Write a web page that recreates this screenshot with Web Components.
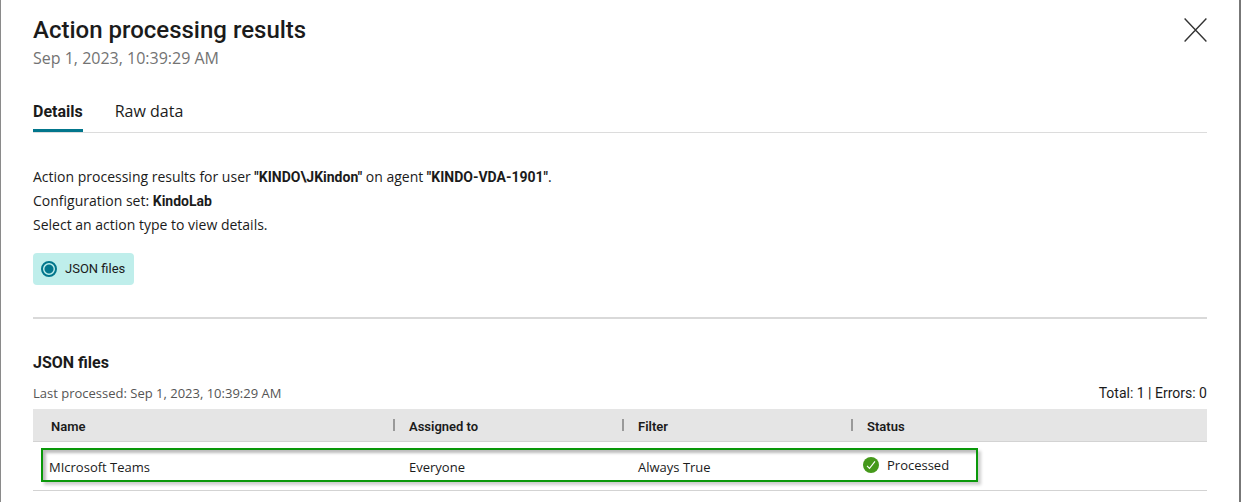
<!DOCTYPE html>
<html lang="en">
<head>
<meta charset="utf-8">
<title>Action processing results</title>
<style>
  html, body { margin: 0; min-height: 100%; background: #fff; }
  body {
    --text-font: "Open Sans", "Liberation Sans", sans-serif;
    --strong-font: Roboto, "Liberation Sans", sans-serif;
    --ink: #1b1b1b;
    --muted: #737373;
    --line: #dcdcdc;
    --accent: #02768c;
    font: 14px/24px var(--text-font);
    color: var(--ink);
  }
</style>
</head>
<body>
<results-dialog>
  <dialog-header slot="header">
    <span slot="title">Action processing results</span>
    <span slot="subtitle">Sep 1, 2023, 10:39:29 AM</span>
  </dialog-header>
  <tab-bar></tab-bar>
  <action-summary user="KINDO\JKindon" agent="KINDO-VDA-1901" config="KindoLab"></action-summary>
  <action-choice>JSON files</action-choice>
  <results-section>
    <span slot="title">JSON files</span>
    <span slot="processed">Last processed: Sep 1, 2023, 10:39:29 AM</span>
    <span slot="counts">Total: 1 | Errors: 0</span>
    <results-table></results-table>
  </results-section>
</results-dialog>
<script>
class View extends HTMLElement {
  constructor() {
    super();
    this.attachShadow({ mode: "open" }).innerHTML = this.markup();
  }
}

customElements.define("results-dialog", class extends View {
  markup() { return `
    <style>
      :host { display: block; box-sizing: border-box; min-height: 100vh; padding: 16px 32px 11px;
        border-left: 1px solid #8a8a8a; border-right: 2px solid #777; }
    </style>
    <slot name="header"></slot>
    <main><slot></slot></main>`; }
});

customElements.define("dialog-header", class extends View {
  markup() { return `
    <style>
      :host { display: flex; justify-content: space-between; align-items: flex-start; }
      h1 { margin: 0; font: 500 24px/28px var(--strong-font); }
      p { margin: 0; font-size: 16px; line-height: 28px; color: var(--muted); }
      button { display: flex; margin: 0; padding: 2px 0; border: 0; background: none; color: #333; }
    </style>
    <div><h1><slot name="title"></slot></h1><p><slot name="subtitle"></slot></p></div>
    <button type="button" aria-label="Close">
      <svg width="23" height="24" viewBox="0 0 23 24" fill="none" stroke="currentColor" stroke-width="1.4"><path d="M.6.6 22.4 23.4M22.4.6.6 23.4"/></svg>
    </button>`; }
});

customElements.define("tab-bar", class extends View {
  markup() { return `
    <style>
      :host { display: block; margin-top: 20px; border-bottom: 1px solid var(--line); }
      nav { display: flex; gap: 32px; }
      a { color: inherit; text-decoration: none; font-size: 16px; line-height: 35px; padding-top: 2px; border-bottom: 3px solid transparent; }
      a[aria-current] { font-family: var(--strong-font); font-weight: 700; border-color: var(--accent); }
    </style>
    <nav><a href="#details" aria-current="page">Details</a><a href="#raw">Raw data</a></nav>`; }
});

customElements.define("action-summary", class extends View {
  markup() {
    const value = name => this.getAttribute(name);
    return `
    <style>
      :host { display: block; margin-top: 32px; }
      p { margin: 0; }
      b { font-family: var(--strong-font); font-weight: 700; }
    </style>
    <p>Action processing results for user <b>"${value("user")}"</b> on agent <b>"${value("agent")}"</b>.</p>
    <p>Configuration set: <b>${value("config")}</b></p>
    <p>Select an action type to view details.</p>`; }
});

customElements.define("action-choice", class extends View {
  markup() { return `
    <style>
      :host { display: flex; margin-top: 16px; padding-bottom: 32px; border-bottom: 2px solid #d9d9d9; }
      label { display: flex; align-items: center; gap: 8px; height: 32px; padding: 0 9px 0 8px; border-radius: 4px;
        background: #bfeeeb; font: 13px/32px var(--strong-font); }
      input { appearance: none; box-sizing: border-box; width: 16px; height: 16px; margin: 0; border: 2px solid var(--accent);
        border-radius: 50%; background: radial-gradient(circle, var(--accent) 4px, transparent 5px); }
    </style>
    <label><input type="radio" name="type" checked><slot></slot></label>`; }
});

customElements.define("results-section", class extends View {
  markup() { return `
    <style>
      :host { display: block; margin-top: 32px; }
      h2 { margin: 0; font: 700 16px/24px var(--strong-font); }
      .meta { display: flex; justify-content: space-between; align-items: center; margin: 6px 0 4px; }
      .processed { font-size: 13px; color: #555; }
      .counts { font-family: var(--strong-font); }
    </style>
    <h2><slot name="title"></slot></h2>
    <div class="meta"><span class="processed"><slot name="processed"></slot></span><span class="counts"><slot name="counts"></slot></span></div>
    <slot></slot>`; }
});

customElements.define("results-table", class extends View {
  markup() { return `
    <style>
      :host { display: block; position: relative; }
      table { width: 100%; table-layout: fixed; border-collapse: separate; border-spacing: 0; font-size: 13px; }
      th, td { box-sizing: border-box; text-align: left; border-bottom: 1px solid #d3d3d3; }
      th { height: 33px; padding: 4px 0 0; background: #e5e5e5; font-family: var(--strong-font); font-weight: 600; line-height: 24px; }
      th span { display: block; padding-left: 16px; }
      th + th span { background: linear-gradient(#999, #999) 0 4px / 2px 12px no-repeat; }
      td { height: 49px; padding: 2px 0 0 16px; }
      .name { width: 360px; }
      .name span { padding-left: 18px; }
      .mid { width: 229px; }
      td:last-child { padding-left: 12px; }
      .status { display: flex; align-items: center; gap: 8px; margin-top: -4px; }
      .mark { position: absolute; left: 8px; right: 229px; top: 39px; height: 34px; box-sizing: border-box;
        border: 2px solid #0a980a; pointer-events: none;
        box-shadow: 3px 3px 3px #0003, inset 3px 3px 3px #0004; }
    </style>
    <table>
      <thead><tr><th class="name"><span>Name</span></th><th class="mid"><span>Assigned to</span></th><th class="mid"><span>Filter</span></th><th><span>Status</span></th></tr></thead>
      <tbody><tr><td>MIcrosoft Teams</td><td>Everyone</td><td>Always True</td>
        <td><div class="status"><svg width="16" height="16" viewBox="0 0 16 16" aria-hidden="true"><circle cx="8" cy="8" r="8" fill="#45991b"/><path d="m4 8.8 2.5 2.6L12 4.4" fill="none" stroke="#fff" stroke-width="1.1"/></svg><span>Processed</span></div></td></tr></tbody>
    </table>
    <div class="mark"></div>`; }
});
</script>
</body>
</html>
